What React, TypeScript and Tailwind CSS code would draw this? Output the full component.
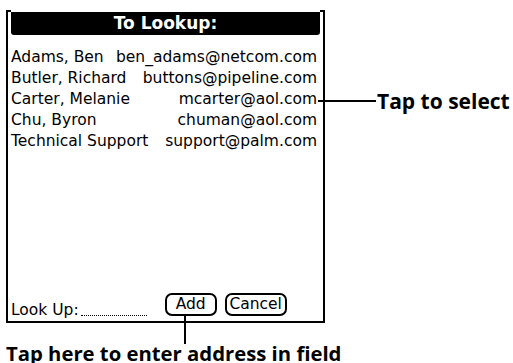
const people = [
  { name: "Adams, Ben", email: "ben_adams@netcom.com" },
  { name: "Butler, Richard", email: "buttons@pipeline.com" },
  { name: "Carter, Melanie", email: "mcarter@aol.com" },
  { name: "Chu, Byron", email: "chuman@aol.com" },
  { name: "Technical Support", email: "support@palm.com" },
];

export default function App() {
  return (
    <div className="relative w-[513px] h-[363px] bg-white overflow-hidden text-black">
      {/* lookup dialog */}
      <div className="ml-[6px] mt-[10px] flex flex-col w-[319px] h-[313px] border-x-2 border-b-2 border-black font-['DejaVu_Sans',sans-serif]">
        <div className="flex">
          <div className="w-[3px] h-[2px] bg-black" />
          <div className="flex-1 mt-[2px] h-[23px] bg-black rounded-b-[3px] flex items-center justify-center text-white font-bold text-[17px]">
            To Lookup:
          </div>
          <div className="w-[3px] h-[2px] bg-black" />
        </div>

        <ul className="mt-[12px] flex flex-col pl-[3px] pr-[6px] text-[15.5px]">
          {people.map((p) => (
            <li key={p.name} className="flex justify-between h-[21px] leading-[21px]">
              <span>{p.name}</span>
              <span>{p.email}</span>
            </li>
          ))}
        </ul>

        <div className="mt-auto flex items-end pl-[3px] text-[15.5px]">
          <span className="leading-[21px]">Look Up:</span>
          <span className="ml-[2px] mb-[5px] w-[66px] border-b border-dotted border-black" />
          <button className="relative ml-[18px] mb-[5px] w-[52px] h-[23px] border-2 border-black rounded-[7px] flex items-center justify-center leading-none">
            Add
            <span className="absolute left-[17px] top-full w-[2px] h-[30px] bg-black" />
          </button>
          <button className="ml-[8px] mb-[5px] w-[62px] h-[23px] border-2 border-black rounded-[7px] flex items-center justify-center leading-none">
            Cancel
          </button>
        </div>
      </div>

      <p className="ml-[6px] mt-[21px] font-['Open_Sans',sans-serif] font-bold text-[20.3px] leading-[18px] whitespace-nowrap">
        Tap here to enter address in field
      </p>

      {/* callout */}
      <div className="absolute left-[318px] top-[90px] flex items-center">
        <div className="w-[58px] h-[2px] bg-black" />
        <span className="ml-[1px] font-['Open_Sans',sans-serif] font-bold text-[21px] leading-[22px] whitespace-nowrap">
          Tap to select
        </span>
      </div>
    </div>
  );
}
